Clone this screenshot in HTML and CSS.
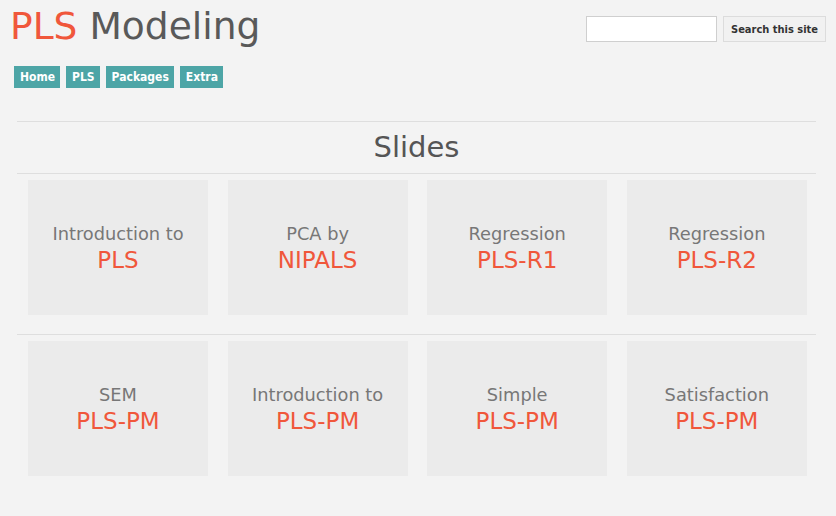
FILE: index.html
```html
<!DOCTYPE html>
<html>
<head>
<meta charset="utf-8">
<title>PLS Modeling</title>
<link rel="stylesheet" href="styles.css">
</head>
<body>
<header class="top">
  <div class="brand">
    <h1 class="logo"><span class="logo-accent">PLS</span> Modeling</h1>
    <nav class="nav">
      <a class="nav-item" href="#">Home</a>
      <a class="nav-item" href="#">PLS</a>
      <a class="nav-item" href="#">Packages</a>
      <a class="nav-item" href="#">Extra</a>
    </nav>
  </div>
  <form class="search">
    <input class="search-input" type="text">
    <button class="search-btn" type="button">Search this site</button>
  </form>
</header>
<main class="content">
  <h2 class="section-title">Slides</h2>
  <div class="row">
    <a class="card" href="#"><span class="card-top">Introduction to</span><span class="card-main">PLS</span></a>
    <a class="card" href="#"><span class="card-top">PCA by</span><span class="card-main">NIPALS</span></a>
    <a class="card" href="#"><span class="card-top">Regression</span><span class="card-main">PLS-R1</span></a>
    <a class="card" href="#"><span class="card-top">Regression</span><span class="card-main">PLS-R2</span></a>
  </div>
  <div class="row">
    <a class="card" href="#"><span class="card-top">SEM</span><span class="card-main">PLS-PM</span></a>
    <a class="card" href="#"><span class="card-top">Introduction to</span><span class="card-main">PLS-PM</span></a>
    <a class="card" href="#"><span class="card-top">Simple</span><span class="card-main">PLS-PM</span></a>
    <a class="card" href="#"><span class="card-top">Satisfaction</span><span class="card-main">PLS-PM</span></a>
  </div>
</main>
</body>
</html>
```

FILE: styles.css
```css
html, body {
  margin: 0;
  padding: 0;
  background: #f3f3f3;
}
body {
  font-family: "DejaVu Sans", Verdana, sans-serif;
  color: #555;
  width: 836px;
  height: 516px;
  overflow: hidden;
}
.top {
  display: flex;
  justify-content: space-between;
  align-items: flex-start;
  padding: 0 10px 0 10px;
}
.brand {
  display: flex;
  flex-direction: column;
}
.logo {
  margin: 5px 0 0 0;
  font-size: 37.6px;
  font-weight: normal;
  line-height: 43px;
  color: #595959;
  letter-spacing: 0;
}
.logo-accent {
  color: #f0573b;
}
.nav {
  display: flex;
  gap: 6px;
  margin-top: 18px;
  margin-left: 4px;
}
.nav-item {
  display: block;
  background: #4da5a6;
  color: #fff;
  text-decoration: none;
  font-family: "DejaVu Sans Condensed", "DejaVu Sans", sans-serif;
  font-stretch: condensed;
  font-weight: bold;
  font-size: 12px;
  line-height: 22px;
  height: 22px;
  padding: 0 5px 0 6px;
}
.search {
  display: flex;
  gap: 6px;
  margin-top: 16px;
}
.search-input {
  box-sizing: border-box;
  width: 131px;
  height: 26px;
  margin: 0;
  border: 1px solid #cfcfcf;
  background: #fff;
  padding: 0 4px;
}
.search-btn {
  box-sizing: border-box;
  width: 103px;
  height: 26px;
  margin: 0;
  border: 1px solid #dcdcdc;
  background: #f1f1f1;
  color: #333;
  font-family: "DejaVu Sans Condensed", "DejaVu Sans", sans-serif;
  font-stretch: condensed;
  font-weight: bold;
  font-size: 11px;
  padding: 0;
}
.content {
  margin: 33px 0 0 17px;
  width: 799px;
  border-top: 1px solid #dedede;
}
.section-title {
  margin: 0;
  font-size: 29px;
  font-weight: normal;
  line-height: 51px;
  text-align: center;
  color: #555;
}
.row {
  display: grid;
  grid-template-columns: repeat(4, 180px);
  column-gap: 19.6px;
  padding: 6px 0 19px 11px;
  border-top: 1px solid #dedede;
}
.card {
  height: 135px;
  background: #ebebeb;
  display: flex;
  flex-direction: column;
  justify-content: center;
  align-items: center;
  text-decoration: none;
}
.card-top {
  font-size: 17.8px;
  line-height: 24px;
  color: #777;
}
.card-main {
  font-size: 23px;
  line-height: 28px;
  color: #f0573b;
}
```
